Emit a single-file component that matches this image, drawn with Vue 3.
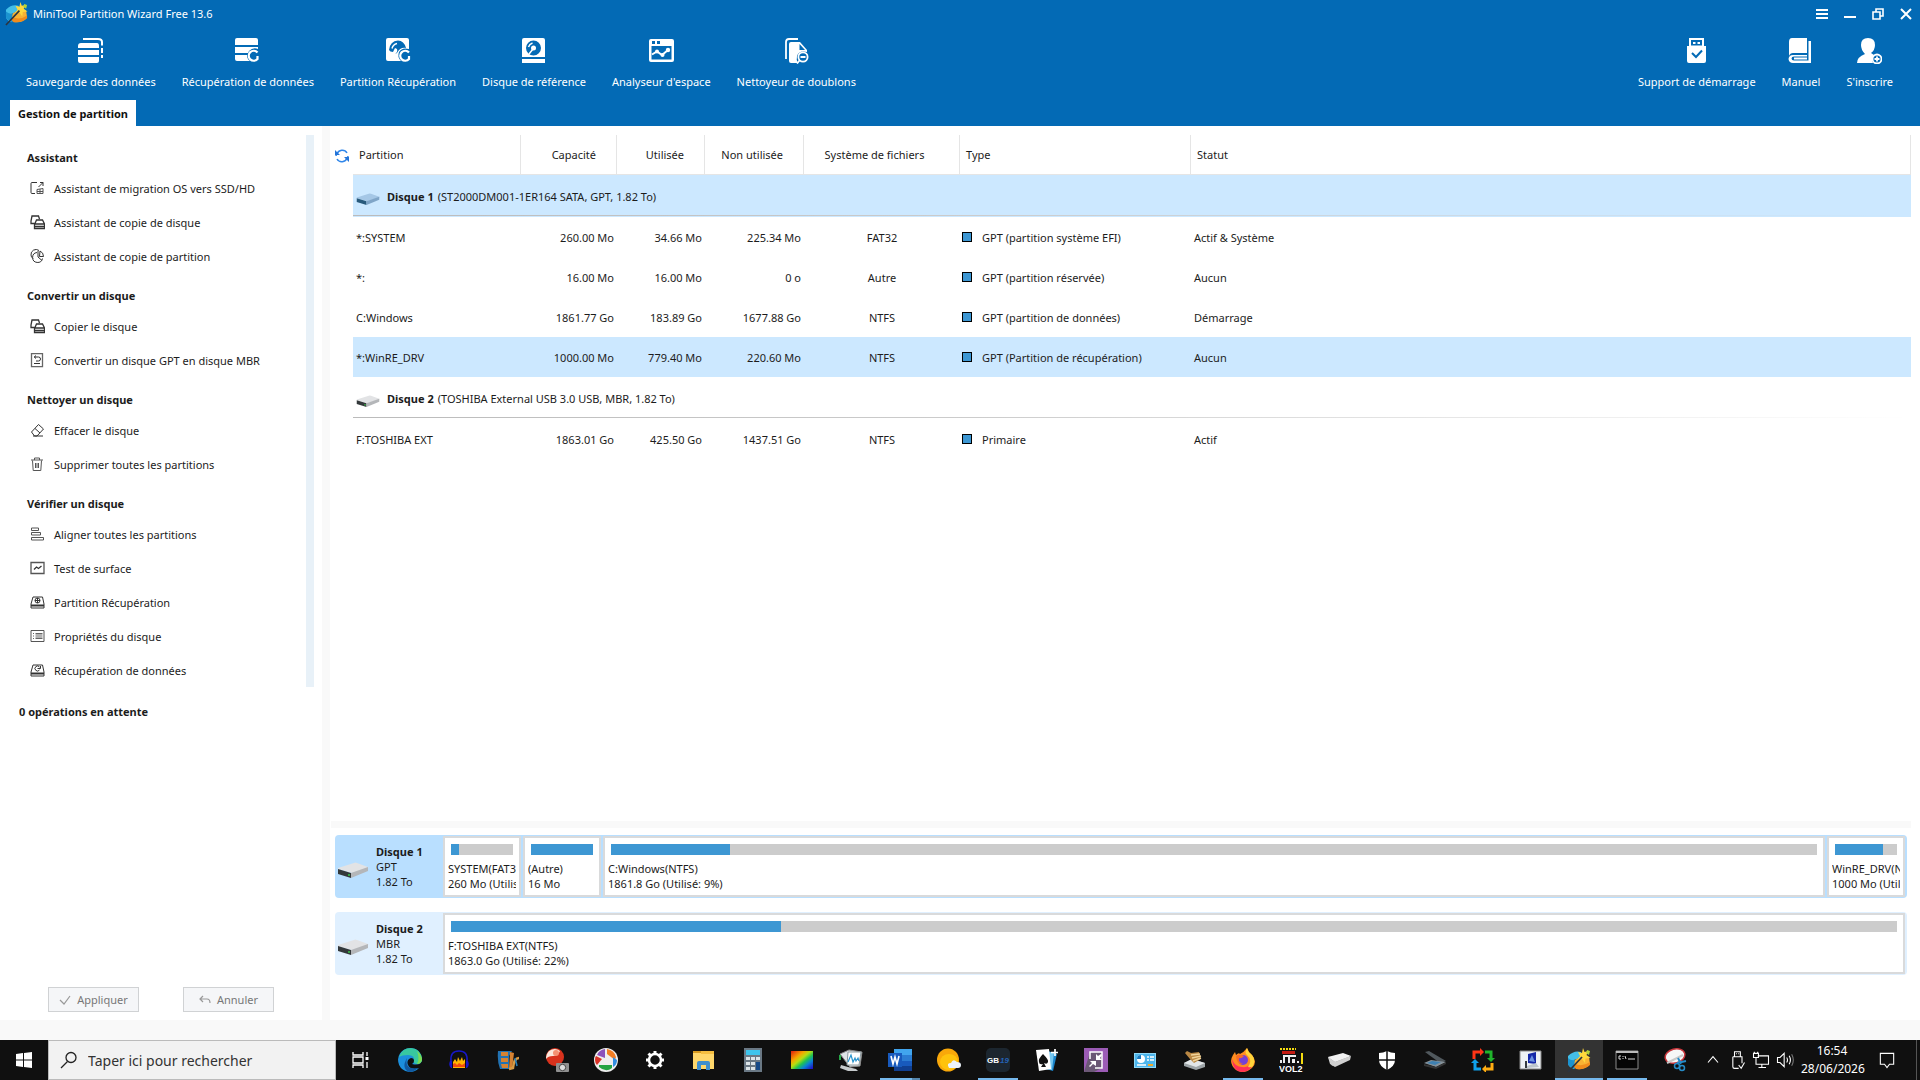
<script setup>
const icons = {
  backup: '<path fill="none" stroke="#fff" stroke-width="2" d="M5 1h15q4 0 4 3v3.500M24 10v5M24 17v3"/><path fill="#fff" d="M3 5h16q2 0 2 3v2H0V8q0-3 3-3zM0 12h21v5H0zM0 19h21v4q0 2-2 2H2q-2 0-2-2z"/>',
  recover: '<path fill="#fff" d="M2 0h19q2 0 2 2v5H0V2q0-2 2-2zM0 9h23v2q-5-2-9 2l-1 2H0zM0 17h12q0 4 3 6H2q-2 0-2-2z"/><path fill="none" stroke="#fff" stroke-width="2.200" d="M22.500 14.500a5 5 0 1 0 0 6.500v-3"/>',
  partrec: '<path fill="#fff" d="M2 0h19q2 0 2 2v9q-7-2-10 3-2 5 2 9H2q-2 0-2-2V2q0-2 2-2z"/><path fill="#036ab5" d="M3 12q1-9 9-9.500 6 0 8 7.500-6-1-9 5l-2 1q3-2 2-5l-2-1-2 4q-3 0-4-2z"/><path fill="none" stroke="#fff" stroke-width="1.500" d="M6 10.500q1-4 5-5"/><path fill="none" stroke="#fff" stroke-width="2.200" d="M23 14.500a5 5 0 1 0 0 6.500v-3"/>',
  bench: '<path fill="#fff" fill-rule="evenodd" d="M2 0h19q2 0 2 2v17H0V2q0-2 2-2zM11.500 2.500a7.500 7.500 0 1 0 0 15 7.500 7.500 0 1 0 0-15zM0 21h23v4H0z"/><circle cx="11.500" cy="10" r="2.500" fill="#fff"/><path fill="none" stroke="#fff" stroke-width="1.500" d="M11 11l-4 5M6.500 9q1-3 4-4"/>',
  space: '<path fill="#fff" fill-rule="evenodd" d="M2 1h21q2 0 2 2v19q0 2-2 2H2q-2 0-2-2V3q0-2 2-2zM2.500 8v13.500h20V8zM3 3v3h3V3zM8 3v3h3V3z"/><path fill="none" stroke="#fff" stroke-width="2" d="M3 16.500l5-3 5 3.500 6-5"/><circle cx="8" cy="13.500" r="2" fill="#fff"/><circle cx="13.500" cy="17" r="2" fill="#fff"/><circle cx="19" cy="12" r="2.200" fill="#fff"/>',
  dup: '<path fill="none" stroke="#fff" stroke-width="1.800" d="M2 21V4q0-3 3-3h9"/><path fill="#fff" fill-rule="evenodd" d="M7 4h9l7 8v2q-8-2-10 4-1 4 1 7H7q-2 0-2-2V6q0-2 2-2zM15.500 6v6H21z"/><circle cx="19" cy="19" r="4.600" fill="none" stroke="#fff" stroke-width="1.800"/><path fill="none" stroke="#fff" stroke-width="1.800" d="M16.500 19h5M15.500 22.500L13 25.500"/>',
  usb: '<path fill="#fff" fill-rule="evenodd" d="M5 0h15v8h2v15q0 2-2 2H5q-2 0-2-2V8h2zM7 2v5.500h11V2z"/><path fill="#fff" d="M9 4h2.500v2H9zM13.500 4H16v2h-2.500z"/><path fill="none" stroke="#036ab5" stroke-width="2" d="M8 15l4 4 6-6.500"/>',
  manual: '<path fill="#fff" d="M4 0h15v15H5q-3 0-4 3V4q0-4 3-4zM20.500 3H23v22H5q-4 0-4.500-4Q1 17 5 17h14v1.500H6q-2.500 0-2.500 2T6 22.500h14.500z"/><path fill="#fff" d="M6 19.500h13v2H6z"/>',
  sign: '<path fill="#fff" d="M11 0q7 0 7 7 0 5-4 8l3 2q-3 4-1 8H0q0-6 8-9-4-4-4-9 0-7 7-7z"/><circle cx="20" cy="21" r="4.500" fill="none" stroke="#fff" stroke-width="1.800"/><path fill="none" stroke="#fff" stroke-width="1.800" d="M17.500 21h5M20 18.500v5"/>'
}
const tools = [
  ['backup', 'Sauvegarde des données'], ['recover', 'Récupération de données'], ['partrec', 'Partition Récupération'],
  ['bench', 'Disque de référence'], ['space', "Analyseur d'espace"], ['dup', 'Nettoyeur de doublons']
]
const rightTools = [['usb', 'Support de démarrage'], ['manual', 'Manuel'], ['sign', "S'inscrire"]]

const side = {
  migrate: '<path d="M7 1.500H2q-1 0-1 1v9q0 1 1 1h3M8.500 6l4.500-4.500M10 1.500h3V5"/><path stroke="#555" d="M7 8.500l6-1v5H7zM7 10.500h6M10 8v5"/>',
  copy: '<path stroke-width="1.300" d="M4.500 8.500H1V6l1-5h6.500l1 3M5 8.500L6.500 5h6l2 4v4.500H4.500V9zM5 9h9M5 11.500h9"/>',
  copypart: '<path d="M9 1.500A5 5 0 0 0 1 6q0 2 2 3.500M7 3.500a5 5 0 1 0 5.500 6M8 2v6l4 3.500M10 2q3.500 1.500 3.500 5.500H9.500z"/>',
  convert: '<path stroke="#666" stroke-width="1.300" d="M1.500 .700h11v13h-11z"/><path d="M4 4h4.500q2 0 2 2t-2 2H6M6 2.500L4.300 4 6 5.500M4 10.500h6"/>',
  erase: '<path d="M1.500 9l7-7.500 5 4.500-6.500 7H4.500zM5 5.500l5 4.500M3 13h10"/>',
  trash: '<path stroke="#555" d="M1 3h12M4.500 3V1h5v2M2.500 3.500l.700 10h7.600l.700-10M5.500 6v5M7 6v5M8.500 6v5"/>',
  align: '<path stroke="#555" d="M1.500 1h7v2.500h-7zM1.500 5.500h9V8h-9zM1.500 10.500h12V13h-12z"/>',
  test: '<path stroke="#555" stroke-width="1.300" d="M1 1.500h13v11H1z"/><path stroke-width="1.300" d="M4 8.500L6.500 6l2 1.500L11.500 5"/>',
  part: '<path d="M3 2h9.500L14 9v4H1V9z"/><path stroke-width="2" d="M1 10.500h13"/><circle cx="7.500" cy="5.500" r="2.500"/><path d="M7.500 3v5M5 5.500h5"/>',
  props: '<path stroke="#555" d="M1 1.500h13v11H1z"/><path stroke="#666" d="M3 4.500h1M3 7h1M3 9.500h1M5.500 4.500h7M5.500 6h7M5.500 8h7M5.500 9.500h7"/>',
  data: '<path d="M3 2h9.500L14 9v4H1V9z"/><path stroke-width="2" d="M1 10.500h13"/><path d="M9.500 4A2.500 2.500 0 1 0 9.500 7M7.500 5.500h3V3"/>'
}
const groups = [
  { title: 'Assistant', items: [['migrate', 'Assistant de migration OS vers SSD/HD'], ['copy', 'Assistant de copie de disque'], ['copypart', 'Assistant de copie de partition']] },
  { title: 'Convertir un disque', items: [['copy', 'Copier le disque'], ['convert', 'Convertir un disque GPT en disque MBR']] },
  { title: 'Nettoyer un disque', items: [['erase', 'Effacer le disque'], ['trash', 'Supprimer toutes les partitions']] },
  { title: 'Vérifier un disque', items: [['align', 'Aligner toutes les partitions'], ['test', 'Test de surface'], ['part', 'Partition Récupération'], ['props', 'Propriétés du disque'], ['data', 'Récupération de données']] }
]

const disks = [
  {
    name: 'Disque 1', info: '(ST2000DM001-1ER164 SATA, GPT, 1.82 To)', scheme: 'GPT', size: '1.82 To', selected: true,
    rows: [
      { cells: ['*:SYSTEM', '260.00 Mo', '34.66 Mo', '225.34 Mo', 'FAT32', 'GPT (partition système EFI)', 'Actif & Système'] },
      { cells: ['*:', '16.00 Mo', '16.00 Mo', '0 o', 'Autre', 'GPT (partition réservée)', 'Aucun'] },
      { cells: ['C:Windows', '1861.77 Go', '183.89 Go', '1677.88 Go', 'NTFS', 'GPT (partition de données)', 'Démarrage'] },
      { cells: ['*:WinRE_DRV', '1000.00 Mo', '779.40 Mo', '220.60 Mo', 'NTFS', 'GPT (Partition de récupération)', 'Aucun'], selected: true }
    ],
    parts: [
      { label: 'SYSTEM(FAT32)', detail: '260 Mo (Utilisé: 13%)', used: 13 },
      { label: '(Autre)', detail: '16 Mo', used: 100 },
      { label: 'C:Windows(NTFS)', detail: '1861.8 Go (Utilisé: 9%)', used: 9.87, wide: true },
      { label: 'WinRE_DRV(NTFS)', detail: '1000 Mo (Utilisé: 77%)', used: 77.9 }
    ]
  },
  {
    name: 'Disque 2', info: '(TOSHIBA External USB 3.0 USB, MBR, 1.82 To)', scheme: 'MBR', size: '1.82 To', selected: false,
    rows: [{ cells: ['F:TOSHIBA EXT', '1863.01 Go', '425.50 Go', '1437.51 Go', 'NTFS', 'Primaire', 'Actif'] }],
    parts: [{ label: 'F:TOSHIBA EXT(NTFS)', detail: '1863.0 Go (Utilisé: 22%)', used: 22.84, wide: true }]
  }
]

const wizard = '<path fill="#43bfe8" d="M1 8q6-6 13-4l2 5-9 3v9q-6-2-6-6z"/><path fill="#1b93d0" d="M1 10q3 3 7 2v9q-6-2-7-5z"/><path fill="#f9b233" d="M8 12l8-5 6 2 1 7q-4 6-13 5l-3-3z"/><path fill="#f08c1d" d="M8 16q8 3 15-2v3q-5 5-14 4l-2-2z"/><path fill="#ffd83d" d="M16 0l1.500 4 4-1-2 4 4 3-5 .500L18 15l-3-4-5 1 3-4-2-4 4 1z"/><path fill="#b6d437" d="M20 2l3 1-1 4-3-2z"/><path fill="none" stroke="#2c3440" stroke-width="1.700" d="M1 24L15 9"/>'
const apps = [
  { n: 'Microsoft Edge', g: '<path fill="#1c8fdc" d="M12 0a12 12 0 1 0 9 20q-8 3-11-3-2-5 3-7 3 0 3 3 0 2-2 3 9 2 10-4Q23 0 12 0z"/><path fill="#38c8a0" d="M1 9Q4 0 13 0q10 1 11 11 0 4-4 5-5 0-4-3 1-6-6-6-6 0-9 2z"/><path fill="#7bdc55" d="M19 3q5 4 5 9-1 4-5 4 3-5 0-13z"/><path fill="#11599f" d="M9 10q-3 12 11 10-4 4-9 4Q3 20 9 10z"/>' },
  { n: 'Audacity', g: '<path fill="none" stroke="#1717c9" stroke-width="1.500" d="M4 13Q3 3 12 3t8 10"/><path fill="#1717c9" d="M3 13h2v7H4q-3-3-1-7zM19 13h2q2 4-1 7h-1z"/><path fill="#ffb400" d="M6 14l2-3 2 3 1-5 2 4 2-4 1 4 2-2v9H6z"/><path fill="#f04a10" d="M6 16l2-1 2 2 2-2 3 2 3-2v4H6z"/>' },
  { n: 'Éditeur vidéo', g: '<path fill="#2272b2" d="M2 3h14l-3 5v13H4q-3-8-2-18z"/><path fill="#d58232" d="M5 4h7v4H5zM5 10h7v4H5zM5 16h7v4H6zM14 4l4 1-2 16h-3z"/><path fill="none" stroke="#d89b45" stroke-width="2.500" d="M23 10q-5 0-6 10l-4 1"/><path stroke="#2780bd" stroke-width="1.500" d="M19 10l2 8"/>' },
  { n: 'Capture', g: '<circle cx="10" cy="9" r="9" fill="#d8321d"/><path fill="#fbe9dd" d="M4 3q6-4 11 0-2 5-7 5-5 0-7 3 0-5 3-8z"/><circle cx="11" cy="5" r="3" fill="#f49172"/><rect x="11" y="15" width="13" height="9" rx="1" fill="#909090"/><circle cx="17.500" cy="19.500" r="3.200" fill="#ddd" stroke="#444"/>' },
  { n: 'Picasa', g: '<circle cx="12" cy="12" r="12" fill="#eee"/><path fill="#8b50bb" d="M11 1v9L3 7q2-5 8-6z"/><path fill="#f27d24" d="M13 1q7 1 9 8l-1 3-8-6z"/><path fill="#318de1" d="M23 12q0 5-4 7V9z"/><path fill="#23a442" d="M5 17h13v3q-6 5-13-1z"/><path fill="#da3327" d="M1 12q0-3 1-4l6 3-5 6q-2-2-2-5z"/>' },
  { n: 'Paramètres', g: '<circle cx="12" cy="12" r="6" fill="none" stroke="#fff" stroke-width="2.500"/><path stroke="#fff" stroke-width="3" d="M12 3v3M12 18v3M3 12h3M18 12h3M5.500 5.500l2 2M16.500 16.500l2 2M5.500 18.500l2-2M16.500 7.500l2-2"/>' },
  { n: 'Explorateur', g: '<path fill="#d89b20" d="M1 3h8l2 3H1z"/><path fill="#ffd76b" d="M1 5h21v16H1z"/><path fill="#f5be40" d="M9 3h13v3H9z"/><path fill="#3f8fce" d="M5 22v-7q0-2 2-2h9q2 0 2 2v7h-4v-5H9v5z"/>' },
  { n: 'Calculatrice', g: '<path fill="#6a7884" d="M3 0h18v24H3z"/><path fill="#3ec4ec" d="M5 2h14v5H5z"/><path fill="#dce4e8" d="M5 9h4v3H5zM10 9h4v3h-4zM15 9h4v3h-4zM5 14h4v3H5zM10 14h4v3h-4zM5 19h4v3H5zM10 19h4v3h-4z"/><path fill="#164a88" d="M15 14h4v8h-4z"/>' },
  { n: 'Couleurs', g: '<defs><linearGradient id="spectrum" x2="1" y2="1"><stop stop-color="#e01a0d"/><stop offset=".3" stop-color="#f6a500"/><stop offset=".45" stop-color="#b6df10"/><stop offset=".6" stop-color="#1fc452"/><stop offset=".75" stop-color="#0982d5"/><stop offset="1" stop-color="#2302c4"/></linearGradient></defs><path fill="url(#spectrum)" d="M1 3h22v18H1z"/>' },
  { n: 'Moniteur', g: '<path fill="#dfe5e7" stroke="#888" d="M1 6l9-4 13 2-2 14-10 1z"/><path fill="#fff" stroke="#8a979c" d="M9 4h13l-2 13H8z"/><path fill="none" stroke="#2b95cd" stroke-width="1.200" d="M9 14l3-7 2 7 2-4 1 3 2-3 1 3"/><path fill="#c6cacc" d="M2 17l7 2 8 2 2 2H9l-8-3z"/><path stroke="#27aa48" stroke-width="2" d="M1 7v5"/>' },
  { n: 'Word', run: 'many', g: '<path fill="#41a5ee" d="M6 1h18v6H6z"/><path fill="#2b7cd3" d="M6 7h18v6H6z"/><path fill="#185abd" d="M6 13h18v5H6z"/><path fill="#103f91" d="M6 18h18v5H6z"/><path fill="#185abd" d="M0 5h14v14H0z"/><path fill="none" stroke="#fff" stroke-width="1.600" d="M3 8l2 8 2-7 2 7 2-8"/>' },
  { n: 'Météo', g: '<ellipse cx="11" cy="12" rx="11" ry="11.500" fill="#f9a80a"/><ellipse cx="12" cy="14" rx="9" ry="8" fill="#ffc30c"/><path fill="#eef4fa" d="M12 20q-3-5 2-5 2-5 6-1 4 0 4 3 0 3-3 3z"/>' },
  { n: 'Garde', run: 'one', g: '<rect width="24" height="24" rx="5" fill="#1c262f"/><text x="1" y="15" font-family="Liberation Sans, sans-serif" font-size="8" font-weight="bold" fill="#fff">GB</text><text x="14" y="15" font-family="Liberation Sans, sans-serif" font-size="8" font-style="italic" font-weight="bold" fill="#2462b6">19</text>' },
  { n: 'Solitaire', g: '<path fill="#1a84cb" d="M13 3l9 3-4 17-7-2z"/><path fill="#75c7f0" d="M11 3l8 2-2 17-6-1z"/><path fill="#fff" d="M1 2l13-1 2 20-12 2z"/><path fill="#111" d="M8 6q6 6 5 8-1 3-4 1l2 4H6l2-3q-4 1-4-2-1-3 4-8z"/><path stroke="#fff" stroke-width="1.700" d="M20 1v7M16 4.500h7"/>' },
  { n: 'Compression', g: '<path fill="#9b5bb5" d="M0 0h24v24H0z"/><path fill="#6b5875" d="M0 24L6 4h12v16L10 24z"/><path fill="none" stroke="#fff" stroke-width="1.500" d="M6 11V4h12v16h-7"/><path fill="#fff" d="M12 6v6h6l-2-2 2-3-1-1-3 2zM12 13H6l2 2-3 3 1 1 3-3 3 2z"/>' },
  { n: 'Panneau', g: '<path fill="#8fd9f8" d="M1 5h22v15H1z"/><path fill="#4db6ed" d="M2 6h20v13H2z"/><circle cx="8" cy="11" r="4" fill="#fff"/><path fill="#1979bf" d="M8 11V7a4 4 0 0 0-4 4z"/><path stroke="#fff" stroke-width="1.500" d="M14 9h2M17 9h4M14 12h2M17 12h4M4 17h9"/><path stroke="#f3aa28" stroke-width="2" d="M15 17h5"/>' },
  { n: 'Nettoyage de disque', g: '<path fill="#9da4a7" d="M2 15l8-4 13 4v4l-9 3-12-4z"/><path fill="#e2e6e8" d="M2 15l8-4 13 4-9 4z"/><path fill="#b98743" d="M3 5l2-2 4 2 8-1 2 7-7 4-4-4z"/><path stroke="#efd39a" stroke-width="1.500" d="M9 7l9-1M10 10l9-2M11 13l8-3"/>' },
  { n: 'Firefox', run: 'one', g: '<path fill="#ff8d20" d="M16 0q1 4 5 7 6 7 0 13-8 7-16 2-8-7-3-15l2-3 1 3q3-3 4-1 4-2 7-6z"/><path fill="#ff3156" d="M1 11q3 8 10 8 7 1 11-5-1 9-10 10Q2 24 1 11z"/><path fill="#ffd43b" d="M16 0q1 4 5 7 4 5 1 11-2 2-5 1 5-7-1-12-3-2 0-7z"/><circle cx="12" cy="12" r="5" fill="#7540d5"/><path fill="#f56c25" d="M5 8q3-3 8 0-3 3-5 2-1 4 4 6-6 1-7-8z"/>' }
]
const apps2 = [
  { n: 'Jeu VOL2', g: '<path stroke="#f4dc10" stroke-width="2" stroke-dasharray="2 1" d="M1 1h16"/><path fill="#f4dc10" d="M22 5h2v11h-2z"/><path fill="#c51b12" d="M3 3h13v3H3z"/><path fill="#eee" d="M1 12h2v3H1zM4 7h13v2h-6v6H9V9H6v6H4zM13 11h3v4h-3zM18 13h2v2h-2z"/><text x="0" y="24" font-family="Liberation Sans, sans-serif" font-size="9" font-weight="bold" fill="#fff">VOL2</text>' },
  { n: 'Imprimante', g: '<path fill="#999" d="M1 9l4 9 18-7-1-4z"/><path fill="#f1f1f1" d="M1 9l15-4 8 3-16 6z"/><path fill="#d0d0d0" d="M8 14l16-6-1 4-15 7-5-3-2-7z"/>' },
  { n: 'Sécurité', g: '<path fill="#fff" d="M12 3q4 2 8 2v7q0 6-8 10-8-4-8-10V5q4 0 8-2z"/><path stroke="#101010" stroke-width="1.500" d="M12 2v21M3 12h18"/>' },
  { n: 'Numérisation', g: '<path fill="#50585d" d="M2 4l4-1 17 10-6 2z"/><path fill="#859098" d="M1 15l7-3 15 2-10 5z"/><path fill="#3e80b1" d="M4 15l5-2 9 1-6 3z"/><path fill="#333" d="M1 16l12 3 10-5v2l-10 5-12-3z"/>' },
  { n: 'Synchronisation', g: '<path fill="none" stroke="#ff3516" stroke-width="3" d="M3 11V4h7"/><path fill="#ff3516" d="M9 0l4 4-4 4z"/><path fill="none" stroke="#20b52c" stroke-width="3" d="M14 4h6v7"/><path fill="#20b52c" d="M16 10h8l-4 4z"/><path fill="none" stroke="#ffad12" stroke-width="3" d="M21 15v6h-6"/><path fill="#ffad12" d="M15 17v8l-4-4z"/><path fill="none" stroke="#10a2ec" stroke-width="3" d="M10 21H4v-6"/><path fill="#10a2ec" d="M0 15l4-4 4 4z"/>' },
  { n: 'Bureau à distance', g: '<path fill="#eef2f5" stroke="#888" d="M1 3h21v18H1z"/><path fill="#1428a8" d="M9 6l8-2v12l-8-1z"/><path fill="#6a91e0" d="M10 13l3-6 3 7z"/><path fill="#bcc5cc" d="M8 18l9-3 3 4-12 1z"/><path fill="#353b40" d="M6 13h2v7H6z"/>' },
  { n: 'MiniTool Partition Wizard', run: 'active', g: wizard },
  { n: 'Invite de commandes', run: 'one', g: '<path fill="#050505" stroke="#8a8a8a" d="M1 3h22v18H1z"/><path fill="#bbb" d="M1 3h22v2H1z"/><path fill="none" stroke="#ddd" d="M6 8H4v3h2M8 8v1M8 10v1M10 8l1 3M13 11h7"/>' },
  { n: 'Capture d’écran', g: '<ellipse cx="12" cy="8" rx="10" ry="7" fill="#f7f7f7" stroke="#c9373d" stroke-width="1.500" transform="rotate(-15 12 8)"/><path stroke="#c9c9c9" stroke-width="2" d="M4 15l16-8"/><path fill="none" stroke="#268cc8" stroke-width="2" d="M15 10l3 6M23 13l-9 2"/><circle cx="14" cy="18" r="2.500" fill="none" stroke="#268cc8" stroke-width="1.500"/><circle cx="19" cy="20" r="2.500" fill="none" stroke="#268cc8" stroke-width="1.500"/>' }
]
const tray = [
  { n: 'Icônes cachées', g: '<path d="M6 15l6-7 6 7"/>' },
  { n: 'Périphérique USB', g: '<path d="M9 8V2h7v6M7 8h11v8M7 8v12q0 2 2 2h5M11 4.500h1M13.500 4.500h1M14 18l3 4 4-7"/>' },
  { n: 'Réseau', g: '<path d="M8 7h13v10H6v-5M13 17v4M9 21h9M3 4h6v5H3zM6 9v5M4 4V2M8 4V2"/>' },
  { n: 'Volume', g: '<path d="M3 9h3l5-5v16l-5-5H3zM14 9q2 3 0 6M17 7q3 5 0 10"/><path stroke="#777" d="M20 5q4 7 0 14"/>' }
]
const heads = ['Partition', 'Capacité', 'Utilisée', 'Non utilisée', 'Système de fichiers', 'Type', 'Statut']
const cls = ['name', 'num', 'num', 'num', 'fs', 'type', 'status']
</script>

<template>
  <div class="screen">
    <header class="top">
      <div class="titlebar">
        <svg class="logo" viewBox="0 0 25 25" v-html="wizard"></svg>
        <span class="title">MiniTool Partition Wizard Free 13.6</span>
        <div class="winbtns">
          <button aria-label="Menu"><svg viewBox="0 0 12 12"><path stroke-width="2" d="M0 2h12M0 6h12M0 10h12" /></svg></button>
          <button aria-label="Réduire"><svg viewBox="0 0 12 12"><path stroke-width="2" d="M0 9h12" /></svg></button>
          <button aria-label="Restaurer"><svg viewBox="0 0 12 12"><path stroke-width="1.600" d="M1 4h7v7H1zM4 4V1h7v7H8" /></svg></button>
          <button aria-label="Fermer"><svg viewBox="0 0 12 12"><path stroke-width="2" d="M1 1l10 10M11 1L1 11" /></svg></button>
        </div>
      </div>
      <nav class="toolbar">
        <button v-for="t in tools" :key="t[0]" class="tool"><svg viewBox="0 0 25 26" v-html="icons[t[0]]"></svg><span>{{ t[1] }}</span></button>
        <div class="spacer"></div>
        <button v-for="t in rightTools" :key="t[0]" class="tool"><svg viewBox="0 0 25 26" v-html="icons[t[0]]"></svg><span>{{ t[1] }}</span></button>
      </nav>
      <div class="tabs"><button class="tab">Gestion de partition</button></div>
    </header>

    <main class="main">
      <aside class="sidebar">
        <div class="scroller">
          <div class="groups">
            <section v-for="g in groups" :key="g.title">
              <h2>{{ g.title }}</h2>
              <button v-for="i in g.items" :key="i[1]" class="action">
                <svg viewBox="0 0 15 15" v-html="side[i[0]]"></svg>{{ i[1] }}
              </button>
            </section>
          </div>
          <div class="track"></div>
        </div>
        <p class="pending">0 opérations en attente</p>
        <div class="actions">
          <button disabled><svg viewBox="0 0 12 12"><path d="M1 6l4 4 6-8" /></svg>Appliquer</button>
          <button disabled><svg viewBox="0 0 12 12"><path d="M4 2L1 5l3 3M1 5h7q3 0 3 4" /></svg>Annuler</button>
        </div>
      </aside>

      <div class="content">
        <div class="list">
          <button class="refresh" aria-label="Actualiser">
            <svg viewBox="0 0 14 14"><path d="M2 5a5.500 5.500 0 0 1 10-1M13 7q0 1-1 2M12 9a5.500 5.500 0 0 1-10 1M1 7q0-1 1-2" /><path class="tip" d="M0 1v5h5zM14 13V8H9z" /></svg>
          </button>
          <table>
            <colgroup><col class="c1" /><col class="c2" /><col class="c3" /><col class="c4" /><col class="c5" /><col class="c6" /><col /></colgroup>
            <thead><tr><th v-for="(h, i) in heads" :key="h" :class="cls[i]" scope="col">{{ h }}</th></tr></thead>
            <tbody v-for="d in disks" :key="d.name">
              <tr class="disk" :class="{ selected: d.selected }">
                <td colspan="7">
                  <div class="diskline">
                    <svg class="drive" :class="{ tint: d.selected }" viewBox="0 0 32 16"><path class="d1" d="M1 6L17 1q1-1 3 0l11 4q1 0 0 1L15 11 1 7z" /><path class="d2" d="M1 7l13 4v5L1 12z" /><path class="d3" d="M14 11l17-6v4l-17 7z" /><path class="d4" d="M11 12h2v2h-2z" /></svg>
                    <strong>{{ d.name }}</strong><span>{{ d.info }}</span>
                  </div>
                </td>
              </tr>
              <tr v-for="r in d.rows" :key="r.cells[0]" class="row" :class="{ selected: r.selected }">
                <td v-for="(c, i) in r.cells" :key="i" :class="cls[i]"><i v-if="i === 5" class="swatch"></i>{{ c }}</td>
              </tr>
            </tbody>
          </table>
        </div>
        <div class="hsplit"></div>
        <div class="maps">
          <div v-for="d in disks" :key="d.name" class="map" :class="{ selected: d.selected }">
            <div class="mapinfo">
              <svg class="drive" viewBox="0 0 32 16"><path class="d1" d="M1 6L17 1q1-1 3 0l11 4q1 0 0 1L15 11 1 7z" /><path class="d2" d="M1 7l13 4v5L1 12z" /><path class="d3" d="M14 11l17-6v4l-17 7z" /><path class="d4" d="M11 12h2v2h-2z" /></svg>
              <div><strong>{{ d.name }}</strong><span>{{ d.scheme }}</span><span>{{ d.size }}</span></div>
            </div>
            <div v-for="p in d.parts" :key="p.label" class="part" :class="{ wide: p.wide }">
              <div class="bar"><div class="fill" :style="{ width: p.used + '%' }"></div></div>
              <span>{{ p.label }}</span><span>{{ p.detail }}</span>
            </div>
          </div>
        </div>
      </div>
    </main>

    <footer class="taskbar">
      <button class="start" aria-label="Démarrer"><svg viewBox="0 0 16 16"><path fill="#fff" d="M0 2l7-1v6.500H0zM8 1l8-1v7.500H8zM0 8.500h7V15l-7-1zM8 8.500h8V16l-8-1z" /></svg></button>
      <label class="search">
        <svg viewBox="0 0 18 18"><circle cx="11" cy="6.500" r="5" /><path d="M7.500 10.500L1 17" /></svg>
        <input type="text" aria-label="Rechercher" placeholder="Taper ici pour rechercher" />
      </label>
      <button class="app" aria-label="Affichage des tâches"><svg viewBox="0 0 24 24"><path fill="none" stroke="#fff" stroke-width="1.300" d="M4 4v3h10V4M4 20v-3h10v3M4 9h10v6H4zM18 4v4M18 14v6" /><path fill="#fff" d="M16.500 9h3v3h-3z" /></svg></button>
      <button v-for="a in apps" :key="a.n" class="app" :class="a.run" :aria-label="a.n"><svg viewBox="0 0 24 24" v-html="a.g"></svg></button>
      <button v-for="a in apps2" :key="a.n" class="app slim" :class="a.run" :aria-label="a.n"><svg viewBox="0 0 24 24" v-html="a.g"></svg></button>
      <div class="tray">
        <button v-for="t in tray" :key="t.n" :aria-label="t.n"><svg viewBox="0 0 24 24" v-html="t.g"></svg></button>
        <div class="clock"><span>16:54</span><span>28/06/2026</span></div>
        <button class="notif" aria-label="Notifications"><svg viewBox="0 0 24 24"><path d="M4 4h16v13h-5l-3 4-3-4H4z" /></svg></button>
        <div class="peek"></div>
      </div>
    </footer>
  </div>
</template>

<style>
body { margin: 0; }
</style>
<style scoped>
.screen { min-height: 100vh; display: flex; flex-direction: column; background: #f9f9f9; color: #1c1c1c; font: 11px/16px "Noto Sans", "Open Sans", sans-serif; }
button { font: inherit; color: inherit; border: 0; background: none; padding: 0; margin: 0; }
svg { display: block; flex: none; }
.top { background: #036ab5; color: #fff; height: 126px; display: flex; flex-direction: column; }
.titlebar { display: flex; align-items: center; height: 28px; padding: 0 8px 0 5px; }
.logo { width: 24px; height: 24px; margin-right: 4px; }
.winbtns { margin-left: auto; display: flex; gap: 16px; }
.winbtns svg { width: 12px; height: 12px; fill: none; stroke: #fff; }
.toolbar { display: flex; gap: 26px; padding: 10px 27px 0 26px; height: 62px; }
.tool { display: flex; flex-direction: column; align-items: center; justify-content: flex-start; gap: 10px; white-space: nowrap; }
.tool svg { width: 25px; height: 26px; }
.spacer { flex: 1; }
.tabs { padding-left: 10px; }
.tab { background: #fff; color: #111; font-weight: bold; height: 26px; padding: 2px 8px 0; }
.main { flex: 1; display: grid; grid-template-columns: 322px 1fr; background: #fff; border-bottom: 20px solid #f9f9f9; }
.sidebar { display: flex; flex-direction: column; padding-top: 9px; }
.scroller { display: flex; padding-right: 8px; }
.groups { flex: 1; }
.track { width: 8px; background: #e8f1f8; }
h2 { font-size: 11px; line-height: 26px; margin: 0; padding: 10px 0 0 27px; }
.action { display: flex; align-items: center; gap: 9px; width: 100%; height: 34px; padding: 2px 0 0 30px; text-align: left; white-space: nowrap; }
.action svg { width: 15px; height: 15px; margin-bottom: 1px; fill: none; stroke: #333; }
.pending { margin: 17px 0 0 19px; font-weight: bold; }
.actions { margin: auto 0 8px 48px; display: flex; gap: 44px; }
.actions button { width: 91px; height: 25px; display: flex; align-items: center; justify-content: center; gap: 6px; border: 1px solid #d0d2d4; background: #f5f6f8; color: #777; }
.actions svg { width: 12px; height: 12px; fill: none; stroke: #999; stroke-width: 1.200; }
.content { display: flex; flex-direction: column; min-width: 0; border-left: 8px solid #f9f9f9; }
.list { flex: 1; display: flex; align-items: flex-start; padding: 9px 9px 0 5px; }
.refresh { margin: 14px 4px 0 0; }
.refresh svg { width: 14px; height: 14px; fill: none; stroke: #2f86ea; stroke-width: 1.500; }
.refresh .tip { fill: #2474d8; stroke: none; }
table { flex: 1; table-layout: fixed; border-collapse: separate; border-spacing: 0; }
.c1 { width: 168px; } .c2 { width: 96px; } .c3 { width: 88px; } .c4 { width: 99px; } .c5 { width: 156px; } .c6 { width: 231px; }
th, td { padding: 2px 0 0; white-space: nowrap; text-align: left; box-sizing: border-box; }
th { height: 40px; padding-top: 0; font-weight: normal; border-right: 1px solid #e5e5e5; border-bottom: 1px solid #e5e5e5; }
th.name, th.type, th.status { padding-left: 6px; }
th.num { text-align: right; padding-right: 20px; }
th.fs { text-align: center; padding-right: 14px; }
.row td { height: 40px; }
td.name { padding-left: 3px; }
td.num { text-align: right; padding-right: 3px; }
td.fs { text-align: center; }
td.type { padding-left: 2px; }
td.status { padding-left: 3px; }
.swatch { display: inline-block; width: 8px; height: 8px; border: 1px solid #000; background: #3d97d3; margin-right: 10px; }
.selected td { background-color: #cce8ff; }
.disk td { height: 42px; background-image: linear-gradient(90deg, #bbb, #ccc 40%, transparent); background-size: 100% 1px; background-repeat: no-repeat; background-position: 0 40px; }
.diskline { display: flex; align-items: center; padding-left: 3px; }
.drive { width: 24px; height: 12px; margin: 3px 7px 0 0; }
.diskline strong { margin-right: 4px; }
.d1 { fill: #e2e3e5; } .d2 { fill: #33383a; } .d3 { fill: #b4b6b9; } .d4 { fill: #37a344; }
.tint .d1 { fill: #a5c7e6; } .tint .d2, .tint .d4 { fill: #285a7c; } .tint .d3 { fill: #7fa5c8; }
.hsplit { height: 7px; background: #f9f9f9; margin: 0 9px 0 1px; }
.maps { display: flex; flex-direction: column; gap: 14px; padding: 7px 13px 45px 5px; }
.map { display: flex; gap: 2px; height: 63px; box-sizing: border-box; padding: 1px 2px 1px 0; border-radius: 4px; background: #e0f0ff; }
.map.selected { background: #b9dfff; }
.mapinfo { width: 106px; display: flex; align-items: center; padding-left: 2px; box-sizing: border-box; }
.mapinfo .drive { width: 32px; height: 16px; margin: 6px 7px 0 0; }
.mapinfo strong, .mapinfo span { display: block; line-height: 15px; }
.part { width: 78px; box-sizing: border-box; border: 2px solid #d9dadb; background: #fff; padding: 6px 3px 0; overflow: hidden; }
.part.wide { flex: 1; }
.bar { height: 11px; margin: 0 3px 6px; background: #ccc; }
.fill { height: 11px; background: #3d97d3; }
.part span { display: block; line-height: 15px; white-space: nowrap; overflow: hidden; }
.taskbar { height: 40px; display: flex; background: #101010; color: #fff; }
.start { width: 48px; display: grid; place-items: center; }
.start svg { width: 16px; height: 16px; }
.search { width: 288px; box-sizing: border-box; display: flex; align-items: center; gap: 10px; padding: 0 11px; background: #f2f2f2; border: 1px solid #bbb; }
.search svg { width: 18px; height: 18px; fill: none; stroke: #222; stroke-width: 1.300; }
.search input { flex: 1; min-width: 0; border: 0; padding: 2px 0 0; background: none; font: 14px/20px "Noto Sans", "Open Sans", sans-serif; }
.search input::placeholder { color: #333; opacity: 1; }
.app { width: 49px; height: 40px; display: grid; place-items: center; box-sizing: border-box; border-bottom: 2px solid transparent; padding-top: 2px; background-repeat: no-repeat; }
.slim { width: 48px; }
.app svg { width: 24px; height: 24px; }
.one, .many { border-bottom: 0; padding-bottom: 2px; background-size: 40px 2px; background-position: 50% 100%; background-image: linear-gradient(#76b9ed, #76b9ed); }
.many { background-image: linear-gradient(90deg, #76b9ed 32px, #5587ae 32px); }
.active { background: #333; border-bottom-color: #76b9ed; }
.tray { margin-left: auto; display: flex; align-items: center; }
.tray button { width: 24px; display: grid; place-items: center; }
.tray svg { width: 20px; height: 20px; fill: none; stroke: #fff; stroke-width: 1.300; }
.clock { width: 62px; margin-left: 4px; display: flex; flex-direction: column; text-align: center; font-size: 12px; line-height: 18px; }
.tray .notif { width: 48px; margin-right: 5px; }
.peek { width: 4px; height: 40px; border-left: 1px solid #555; box-sizing: border-box; }
</style>
